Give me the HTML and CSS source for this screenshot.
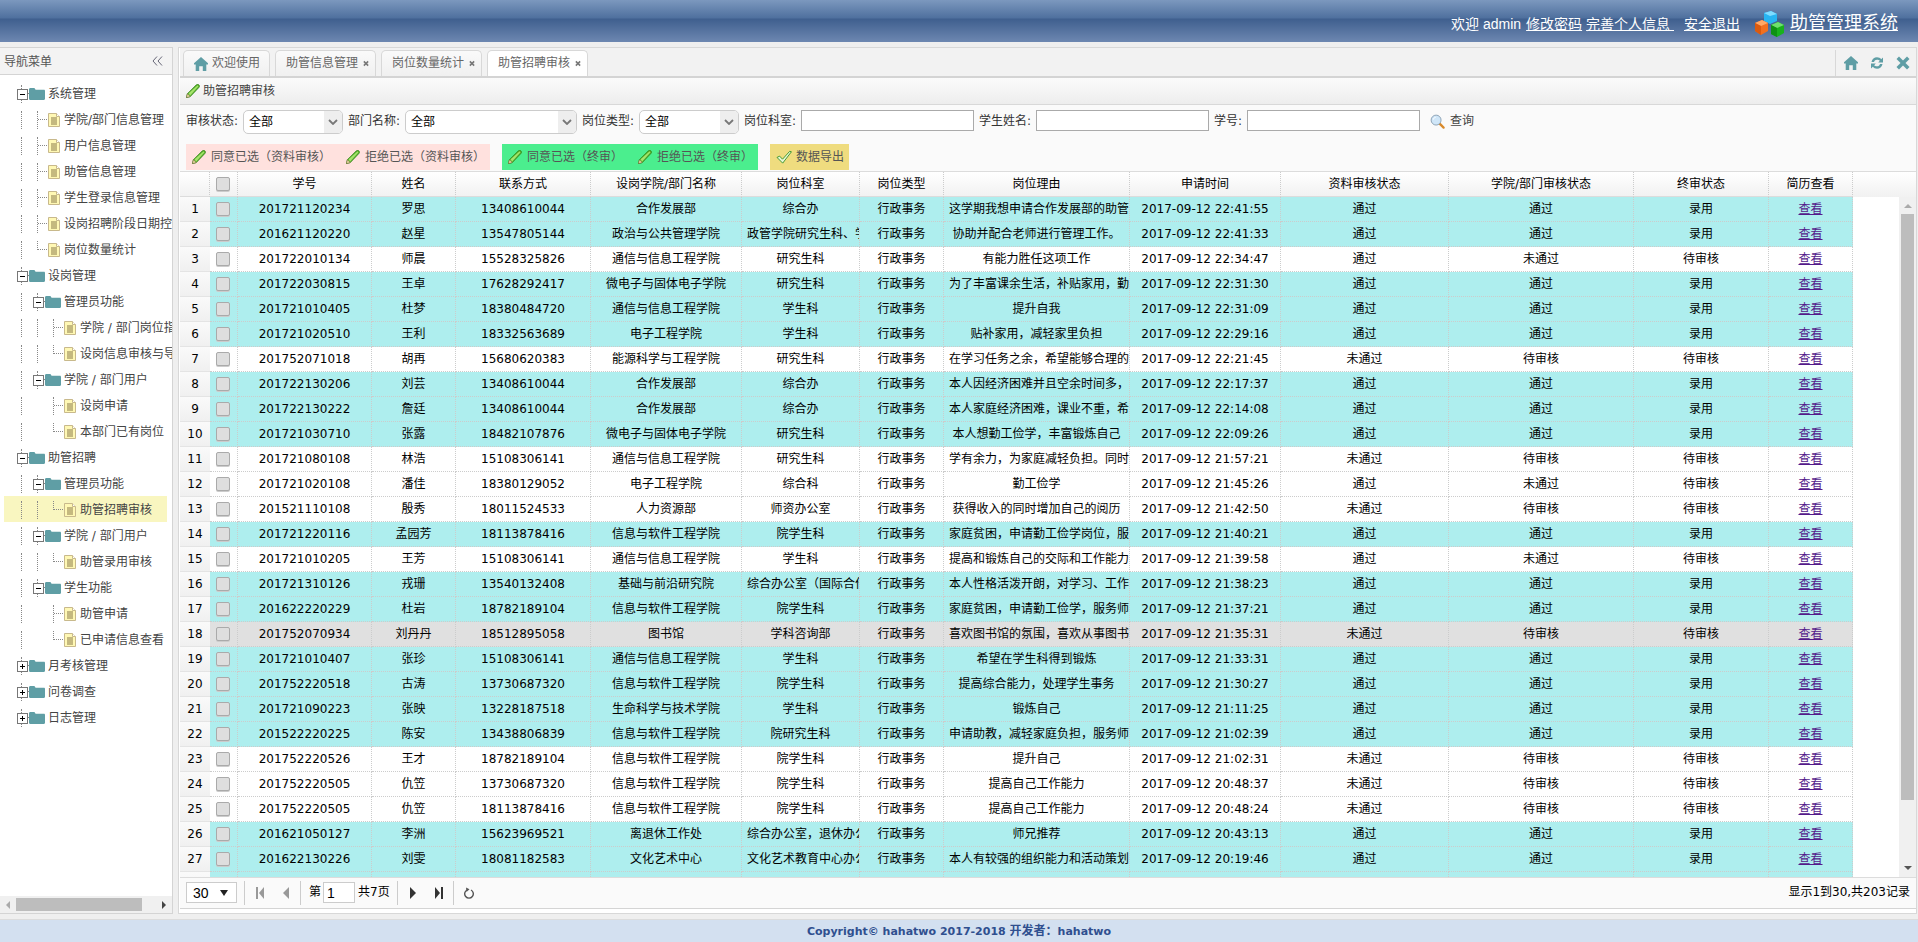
FILE: index.html
```html
<!DOCTYPE html>
<html lang="zh-CN">
<head>
<meta charset="utf-8">
<title>助管管理系统</title>
<link rel="stylesheet" href="styles.css">
</head>
<body>
<svg class="sprite" xmlns="http://www.w3.org/2000/svg">
  <symbol id="i-pencil" viewBox="0.5 0.5 15 15"><path d="M1 15l1-4L11.500 1.500c.8-.8 2-.8 2.800 0s.7 1.900 0 2.700L5 14z" fill="#5cb82c" stroke="#2f7d16" stroke-width=".9"/><path d="M3.300 10.500L12.800 2l1 1L5 12.700z" fill="#a6e36d"/><path d="M1 15l1-4 3 3z" fill="#f4e2b0" stroke="#7a6a3a" stroke-width=".6"/></symbol>
  <symbol id="i-folder" viewBox="0 0 16 13"><path d="M0 2.500C0 1.500.6 1 1.400 1h3.300c.8 0 1.100.4 1.400 1l.5.800h8.300c.7 0 1.100.4 1.100 1.100v7.900c0 .7-.4 1.200-1.100 1.200H1.100C.4 13 0 12.500 0 11.800z" fill="#5f9ea5"/></symbol>
  <symbol id="i-file" viewBox="0 0 12 14"><path d="M.5.500h8l3 3v10H.500z" fill="#fff8b4" stroke="#c8b98c"/><path d="M8.500.500v3h3" fill="#fff" stroke="#c8b98c"/><path d="M3 5h6M3 7h6M3 9h6M3 11h6" stroke="#8a7a4a"/></symbol>
  <symbol id="i-home" viewBox="0 0 14 14"><path d="M7 0L14 6.300V7.500H12.300V14H8.800V9.300H5.200V14H1.700V7.500H0V6.300z" fill="#5f9ea5"/></symbol>
  <symbol id="i-refresh" viewBox="0 0 14 14"><path d="M1.500 6C2 3 4.300 1.300 7 1.300c1.800 0 3.200.7 4.200 1.900L13 1.500v5H8.200l1.600-1.700C9.200 4 8.200 3.700 7 3.700 5.500 3.700 4.500 4.600 4 6zM12.500 8C12 11 9.700 12.700 7 12.700c-1.800 0-3.200-.7-4.200-1.900L1 12.500v-5h4.800L4.200 9.200C4.800 10 5.800 10.300 7 10.300c1.500 0 2.500-.9 3-2.300z" fill="#5f9ea5"/></symbol>
  <symbol id="i-close" viewBox="0 0 14 14"><path d="M3 .5L7 4.500 11 .5 13.500 3 9.500 7 13.500 11 11 13.500 7 9.500 3 13.500 .5 11 4.500 7 .5 3z" fill="#5f9ea5"/></symbol>
  <symbol id="i-x" viewBox="0 0 7 7"><path d="M1 1l5 5M6 1L1 6" stroke="#777" stroke-width="1.800"/></symbol>
  <symbol id="i-search" viewBox="0 0 16 16"><path d="M9.500 9.500L14.500 14.500" stroke="#d98a2b" stroke-width="2.400" stroke-linecap="round"/><circle cx="6.500" cy="6.500" r="5.300" fill="#cfe6f8" stroke="#8a9fb2"/><path d="M3.500 6c.3-1.500 1.200-2.300 2.600-2.500" stroke="#fff" fill="none"/></symbol>
  <symbol id="i-check" viewBox="0 0 18 16"><path d="M1 8.500l3-1.500 3.300 3.500L15.500 1.500l2 .5L7.500 15z" fill="#e6f6d4" stroke="#2f8f23"/></symbol>
  <symbol id="i-chev" viewBox="0 0 10 6"><path d="M1 1l4 4 4-4" fill="none" stroke="#777" stroke-width="1.800"/></symbol>
  <symbol id="i-chevs" viewBox="0 0 11 10"><path d="M5 .5L1 5l4 4.500M10 .5L6 5l4 4.500" fill="none" stroke="#667" stroke-width="1"/></symbol>
  <symbol id="i-logo" viewBox="0 0 31 27"><path d="M10 2l7-2 6 3v7l-7 3-6-3z" fill="#27b4f2"/><path d="M10 2l6 3 7-2-6-3z" fill="#7fdcff"/><path d="M1 12l7-3 6 3v8l-7 4-6-4z" fill="#f2701f"/><path d="M1 12l6 3 7-3-6-3z" fill="#ffa866"/><path d="M7 15v9l-6-4v-8z" fill="#d95a10"/><path d="M17 14l7-3 6 3v8l-7 4-6-3z" fill="#18b21c"/><path d="M17 14l6 3 7-3-6-3z" fill="#6fe06f"/><path d="M23 17v9l-6-3v-9z" fill="#0e9212"/></symbol>
  <symbol id="p-first" viewBox="0 0 8 12"><path d="M0 0h2v12H0zM8 0v12L3 6z" fill="#999"/></symbol>
  <symbol id="p-prev" viewBox="0 0 6 12"><path d="M6 0v12L0 6z" fill="#999"/></symbol>
  <symbol id="p-next" viewBox="0 0 6 12"><path d="M0 0v12l6-6z" fill="#333"/></symbol>
  <symbol id="p-last" viewBox="0 0 8 12"><path d="M0 0v12l5-6zM6 0h2v12H6z" fill="#333"/></symbol>
  <symbol id="p-reload" viewBox="0 0 10 12"><path d="M3 3A4.300 4.300 0 1 0 7 3" fill="none" stroke="#555" stroke-width="1.400"/><path d="M2 .5l3.500 1.800L2.500 5z" fill="#555"/></symbol>
</svg>

<header class="topbar">
  <span class="welcome">欢迎 admin</span>
  <a class="toplink" href="#">修改密码</a>
  <a class="toplink" href="#">完善个人信息&nbsp;</a>
  <a class="toplink exit" href="#">安全退出</a>
  <svg class="logo"><use href="#i-logo"/></svg>
  <a class="brand" href="#">助管管理系统</a>
</header>

<main class="workspace">
  <aside class="sidebar">
    <div class="side-head"><span>导航菜单</span><svg class="collapse"><use href="#i-chevs"/></svg></div>
    <nav class="tree">
      <div class="node"><span class="tog"></span><svg class="ic-folder"><use href="#i-folder"/></svg><span class="lbl">系统管理</span></div>
      <div class="node"><span class="ind"></span><span class="join"></span><svg class="ic-file"><use href="#i-file"/></svg><span class="lbl">学院/部门信息管理</span></div>
      <div class="node"><span class="ind"></span><span class="join"></span><svg class="ic-file"><use href="#i-file"/></svg><span class="lbl">用户信息管理</span></div>
      <div class="node"><span class="ind"></span><span class="join"></span><svg class="ic-file"><use href="#i-file"/></svg><span class="lbl">助管信息管理</span></div>
      <div class="node"><span class="ind"></span><span class="join"></span><svg class="ic-file"><use href="#i-file"/></svg><span class="lbl">学生登录信息管理</span></div>
      <div class="node"><span class="ind"></span><span class="join"></span><svg class="ic-file"><use href="#i-file"/></svg><span class="lbl">设岗招聘阶段日期控制</span></div>
      <div class="node"><span class="ind"></span><span class="join last"></span><svg class="ic-file"><use href="#i-file"/></svg><span class="lbl">岗位数量统计</span></div>
      <div class="node"><span class="tog"></span><svg class="ic-folder"><use href="#i-folder"/></svg><span class="lbl">设岗管理</span></div>
      <div class="node"><span class="ind"></span><span class="tog"></span><svg class="ic-folder"><use href="#i-folder"/></svg><span class="lbl">管理员功能</span></div>
      <div class="node"><span class="ind"></span><span class="ind"></span><span class="join"></span><svg class="ic-file"><use href="#i-file"/></svg><span class="lbl">学院 / 部门岗位指标</span></div>
      <div class="node"><span class="ind"></span><span class="ind"></span><span class="join last"></span><svg class="ic-file"><use href="#i-file"/></svg><span class="lbl">设岗信息审核与导出</span></div>
      <div class="node"><span class="ind"></span><span class="tog"></span><svg class="ic-folder"><use href="#i-folder"/></svg><span class="lbl">学院 / 部门用户</span></div>
      <div class="node"><span class="ind"></span><span class="ind none"></span><span class="join"></span><svg class="ic-file"><use href="#i-file"/></svg><span class="lbl">设岗申请</span></div>
      <div class="node"><span class="ind"></span><span class="ind none"></span><span class="join last"></span><svg class="ic-file"><use href="#i-file"/></svg><span class="lbl">本部门已有岗位</span></div>
      <div class="node"><span class="tog"></span><svg class="ic-folder"><use href="#i-folder"/></svg><span class="lbl">助管招聘</span></div>
      <div class="node"><span class="ind"></span><span class="tog"></span><svg class="ic-folder"><use href="#i-folder"/></svg><span class="lbl">管理员功能</span></div>
      <div class="node current"><span class="ind"></span><span class="ind"></span><span class="join last"></span><svg class="ic-file"><use href="#i-file"/></svg><span class="lbl">助管招聘审核</span></div>
      <div class="node"><span class="ind"></span><span class="tog"></span><svg class="ic-folder"><use href="#i-folder"/></svg><span class="lbl">学院 / 部门用户</span></div>
      <div class="node"><span class="ind"></span><span class="ind"></span><span class="join last"></span><svg class="ic-file"><use href="#i-file"/></svg><span class="lbl">助管录用审核</span></div>
      <div class="node"><span class="ind"></span><span class="tog"></span><svg class="ic-folder"><use href="#i-folder"/></svg><span class="lbl">学生功能</span></div>
      <div class="node"><span class="ind"></span><span class="ind none"></span><span class="join"></span><svg class="ic-file"><use href="#i-file"/></svg><span class="lbl">助管申请</span></div>
      <div class="node"><span class="ind"></span><span class="ind none"></span><span class="join last"></span><svg class="ic-file"><use href="#i-file"/></svg><span class="lbl">已申请信息查看</span></div>
      <div class="node"><span class="tog plus"></span><svg class="ic-folder"><use href="#i-folder"/></svg><span class="lbl">月考核管理</span></div>
      <div class="node"><span class="tog plus"></span><svg class="ic-folder"><use href="#i-folder"/></svg><span class="lbl">问卷调查</span></div>
      <div class="node"><span class="tog plus"></span><svg class="ic-folder"><use href="#i-folder"/></svg><span class="lbl">日志管理</span></div>
    </nav>
    <div class="hscroll"><span class="arr-l"></span><span class="hthumb"></span><span class="arr-r"></span></div>
  </aside>

  <section class="content">
    <div class="tabs">
      <div class="tab t1"><svg class="tab-home"><use href="#i-home"/></svg>欢迎使用</div>
      <div class="tab">助管信息管理<svg class="tab-x"><use href="#i-x"/></svg></div>
      <div class="tab">岗位数量统计<svg class="tab-x"><use href="#i-x"/></svg></div>
      <div class="tab active">助管招聘审核<svg class="tab-x"><use href="#i-x"/></svg></div>
      <div class="tab-tools">
        <svg><use href="#i-home"/></svg><svg><use href="#i-refresh"/></svg><svg><use href="#i-close"/></svg>
      </div>
    </div>
    <div class="inner">
      <div class="title"><svg class="pencil"><use href="#i-pencil"/></svg>助管招聘审核</div>
      <div class="filters">
        <div class="filter-row">
          <label>审核状态:</label>
          <div class="combo w100"><span>全部</span><i><svg><use href="#i-chev"/></svg></i></div>
          <label>部门名称:</label>
          <div class="combo w172"><span>全部</span><i><svg><use href="#i-chev"/></svg></i></div>
          <label>岗位类型:</label>
          <div class="combo w100"><span>全部</span><i><svg><use href="#i-chev"/></svg></i></div>
          <label>岗位科室:</label>
          <input class="txt" type="text">
          <label>学生姓名:</label>
          <input class="txt" type="text">
          <label class="short">学号:</label>
          <input class="txt" type="text">
          <span class="query"><svg><use href="#i-search"/></svg>查询</span>
        </div>
        <div class="action-row">
          <div class="bar red">
            <span class="act"><svg class="pencil"><use href="#i-pencil"/></svg>同意已选（资料审核）</span>
            <span class="act"><svg class="pencil"><use href="#i-pencil"/></svg>拒绝已选（资料审核）</span>
          </div>
          <div class="bar green">
            <span class="act"><svg class="pencil"><use href="#i-pencil"/></svg>同意已选（终审）</span>
            <span class="act"><svg class="pencil"><use href="#i-pencil"/></svg>拒绝已选（终审）</span>
          </div>
          <div class="bar yellow">
            <span class="act"><svg class="check"><use href="#i-check"/></svg>数据导出</span>
          </div>
        </div>
      </div>
      <div class="grid">
        <table>
          <colgroup>
            <col class="c-n"><col class="c-k"><col class="c-id"><col class="c-name"><col class="c-tel"><col class="c-dept"><col class="c-off"><col class="c-type"><col class="c-why"><col class="c-time"><col class="c-s1"><col class="c-s2"><col class="c-s3"><col class="c-cv">
          </colgroup>
          <thead>
            <tr><th class="n"></th><th><b class="cb"></b></th><th>学号</th><th>姓名</th><th>联系方式</th><th>设岗学院/部门名称</th><th>岗位科室</th><th>岗位类型</th><th>岗位理由</th><th>申请时间</th><th>资料审核状态</th><th>学院/部门审核状态</th><th>终审状态</th><th>简历查看</th></tr>
          </thead>
          <tbody>
            <tr class="ok"><td class="n">1</td><td><b class="cb"></b></td><td>201721120234</td><td>罗思</td><td>13408610044</td><td>合作发展部</td><td>综合办</td><td>行政事务</td><td>这学期我想申请合作发展部的助管</td><td>2017-09-12 22:41:55</td><td>通过</td><td>通过</td><td>录用</td><td><a href="#">查看</a></td></tr>
            <tr class="ok"><td class="n">2</td><td><b class="cb"></b></td><td>201621120220</td><td>赵星</td><td>13547805144</td><td>政治与公共管理学院</td><td>政管学院研究生科、学生科</td><td>行政事务</td><td>协助并配合老师进行管理工作。</td><td>2017-09-12 22:41:33</td><td>通过</td><td>通过</td><td>录用</td><td><a href="#">查看</a></td></tr>
            <tr><td class="n">3</td><td><b class="cb"></b></td><td>201722010134</td><td>师晨</td><td>15528325826</td><td>通信与信息工程学院</td><td>研究生科</td><td>行政事务</td><td>有能力胜任这项工作</td><td>2017-09-12 22:34:47</td><td>通过</td><td>未通过</td><td>待审核</td><td><a href="#">查看</a></td></tr>
            <tr class="ok"><td class="n">4</td><td><b class="cb"></b></td><td>201722030815</td><td>王卓</td><td>17628292417</td><td>微电子与固体电子学院</td><td>研究生科</td><td>行政事务</td><td>为了丰富课余生活，补贴家用，勤工俭学</td><td>2017-09-12 22:31:30</td><td>通过</td><td>通过</td><td>录用</td><td><a href="#">查看</a></td></tr>
            <tr class="ok"><td class="n">5</td><td><b class="cb"></b></td><td>201721010405</td><td>杜梦</td><td>18380484720</td><td>通信与信息工程学院</td><td>学生科</td><td>行政事务</td><td>提升自我</td><td>2017-09-12 22:31:09</td><td>通过</td><td>通过</td><td>录用</td><td><a href="#">查看</a></td></tr>
            <tr class="ok"><td class="n">6</td><td><b class="cb"></b></td><td>201721020510</td><td>王利</td><td>18332563689</td><td>电子工程学院</td><td>学生科</td><td>行政事务</td><td>贴补家用，减轻家里负担</td><td>2017-09-12 22:29:16</td><td>通过</td><td>通过</td><td>录用</td><td><a href="#">查看</a></td></tr>
            <tr><td class="n">7</td><td><b class="cb"></b></td><td>201752071018</td><td>胡再</td><td>15680620383</td><td>能源科学与工程学院</td><td>研究生科</td><td>行政事务</td><td>在学习任务之余，希望能够合理的安排</td><td>2017-09-12 22:21:45</td><td>未通过</td><td>待审核</td><td>待审核</td><td><a href="#">查看</a></td></tr>
            <tr class="ok"><td class="n">8</td><td><b class="cb"></b></td><td>201722130206</td><td>刘芸</td><td>13408610044</td><td>合作发展部</td><td>综合办</td><td>行政事务</td><td>本人因经济困难并且空余时间多，希望</td><td>2017-09-12 22:17:37</td><td>通过</td><td>通过</td><td>录用</td><td><a href="#">查看</a></td></tr>
            <tr class="ok"><td class="n">9</td><td><b class="cb"></b></td><td>201722130222</td><td>詹廷</td><td>13408610044</td><td>合作发展部</td><td>综合办</td><td>行政事务</td><td>本人家庭经济困难，课业不重，希望</td><td>2017-09-12 22:14:08</td><td>通过</td><td>通过</td><td>录用</td><td><a href="#">查看</a></td></tr>
            <tr class="ok"><td class="n">10</td><td><b class="cb"></b></td><td>201721030710</td><td>张露</td><td>18482107876</td><td>微电子与固体电子学院</td><td>研究生科</td><td>行政事务</td><td>本人想勤工俭学，丰富锻炼自己</td><td>2017-09-12 22:09:26</td><td>通过</td><td>通过</td><td>录用</td><td><a href="#">查看</a></td></tr>
            <tr><td class="n">11</td><td><b class="cb"></b></td><td>201721080108</td><td>林浩</td><td>15108306141</td><td>通信与信息工程学院</td><td>研究生科</td><td>行政事务</td><td>学有余力，为家庭减轻负担。同时锻炼</td><td>2017-09-12 21:57:21</td><td>未通过</td><td>待审核</td><td>待审核</td><td><a href="#">查看</a></td></tr>
            <tr><td class="n">12</td><td><b class="cb"></b></td><td>201721020108</td><td>潘佳</td><td>18380129052</td><td>电子工程学院</td><td>综合科</td><td>行政事务</td><td>勤工俭学</td><td>2017-09-12 21:45:26</td><td>通过</td><td>未通过</td><td>待审核</td><td><a href="#">查看</a></td></tr>
            <tr><td class="n">13</td><td><b class="cb"></b></td><td>201521110108</td><td>殷秀</td><td>18011524533</td><td>人力资源部</td><td>师资办公室</td><td>行政事务</td><td>获得收入的同时增加自己的阅历</td><td>2017-09-12 21:42:50</td><td>未通过</td><td>待审核</td><td>待审核</td><td><a href="#">查看</a></td></tr>
            <tr class="ok"><td class="n">14</td><td><b class="cb"></b></td><td>201721220116</td><td>孟园芳</td><td>18113878416</td><td>信息与软件工程学院</td><td>院学生科</td><td>行政事务</td><td>家庭贫困，申请勤工俭学岗位，服务</td><td>2017-09-12 21:40:21</td><td>通过</td><td>通过</td><td>录用</td><td><a href="#">查看</a></td></tr>
            <tr><td class="n">15</td><td><b class="cb"></b></td><td>201721010205</td><td>王芳</td><td>15108306141</td><td>通信与信息工程学院</td><td>学生科</td><td>行政事务</td><td>提高和锻炼自己的交际和工作能力</td><td>2017-09-12 21:39:58</td><td>通过</td><td>未通过</td><td>待审核</td><td><a href="#">查看</a></td></tr>
            <tr class="ok"><td class="n">16</td><td><b class="cb"></b></td><td>201721310126</td><td>戎珊</td><td>13540132408</td><td>基础与前沿研究院</td><td>综合办公室（国际合作部）</td><td>行政事务</td><td>本人性格活泼开朗，对学习、工作认真</td><td>2017-09-12 21:38:23</td><td>通过</td><td>通过</td><td>录用</td><td><a href="#">查看</a></td></tr>
            <tr class="ok"><td class="n">17</td><td><b class="cb"></b></td><td>201622220229</td><td>杜岩</td><td>18782189104</td><td>信息与软件工程学院</td><td>院学生科</td><td>行政事务</td><td>家庭贫困，申请勤工俭学，服务师生</td><td>2017-09-12 21:37:21</td><td>通过</td><td>通过</td><td>录用</td><td><a href="#">查看</a></td></tr>
            <tr class="gray"><td class="n">18</td><td><b class="cb"></b></td><td>201752070934</td><td>刘丹丹</td><td>18512895058</td><td>图书馆</td><td>学科咨询部</td><td>行政事务</td><td>喜欢图书馆的氛围，喜欢从事图书管理</td><td>2017-09-12 21:35:31</td><td>未通过</td><td>待审核</td><td>待审核</td><td><a href="#">查看</a></td></tr>
            <tr class="ok"><td class="n">19</td><td><b class="cb"></b></td><td>201721010407</td><td>张珍</td><td>15108306141</td><td>通信与信息工程学院</td><td>学生科</td><td>行政事务</td><td>希望在学生科得到锻炼</td><td>2017-09-12 21:33:31</td><td>通过</td><td>通过</td><td>录用</td><td><a href="#">查看</a></td></tr>
            <tr class="ok"><td class="n">20</td><td><b class="cb"></b></td><td>201752220518</td><td>古涛</td><td>13730687320</td><td>信息与软件工程学院</td><td>院学生科</td><td>行政事务</td><td>提高综合能力，处理学生事务</td><td>2017-09-12 21:30:27</td><td>通过</td><td>通过</td><td>录用</td><td><a href="#">查看</a></td></tr>
            <tr class="ok"><td class="n">21</td><td><b class="cb"></b></td><td>201721090223</td><td>张映</td><td>13228187518</td><td>生命科学与技术学院</td><td>学生科</td><td>行政事务</td><td>锻炼自己</td><td>2017-09-12 21:11:25</td><td>通过</td><td>通过</td><td>录用</td><td><a href="#">查看</a></td></tr>
            <tr class="ok"><td class="n">22</td><td><b class="cb"></b></td><td>201522220225</td><td>陈安</td><td>13438806839</td><td>信息与软件工程学院</td><td>院研究生科</td><td>行政事务</td><td>申请助教，减轻家庭负担，服务师生</td><td>2017-09-12 21:02:39</td><td>通过</td><td>通过</td><td>录用</td><td><a href="#">查看</a></td></tr>
            <tr><td class="n">23</td><td><b class="cb"></b></td><td>201752220526</td><td>王才</td><td>18782189104</td><td>信息与软件工程学院</td><td>院学生科</td><td>行政事务</td><td>提升自己</td><td>2017-09-12 21:02:31</td><td>未通过</td><td>待审核</td><td>待审核</td><td><a href="#">查看</a></td></tr>
            <tr><td class="n">24</td><td><b class="cb"></b></td><td>201752220505</td><td>仇笠</td><td>13730687320</td><td>信息与软件工程学院</td><td>院学生科</td><td>行政事务</td><td>提高自己工作能力</td><td>2017-09-12 20:48:37</td><td>未通过</td><td>待审核</td><td>待审核</td><td><a href="#">查看</a></td></tr>
            <tr><td class="n">25</td><td><b class="cb"></b></td><td>201752220505</td><td>仇笠</td><td>18113878416</td><td>信息与软件工程学院</td><td>院学生科</td><td>行政事务</td><td>提高自己工作能力</td><td>2017-09-12 20:48:24</td><td>未通过</td><td>待审核</td><td>待审核</td><td><a href="#">查看</a></td></tr>
            <tr class="ok"><td class="n">26</td><td><b class="cb"></b></td><td>201621050127</td><td>李洲</td><td>15623969521</td><td>离退休工作处</td><td>综合办公室，退休办公室</td><td>行政事务</td><td>师兄推荐</td><td>2017-09-12 20:43:13</td><td>通过</td><td>通过</td><td>录用</td><td><a href="#">查看</a></td></tr>
            <tr class="ok"><td class="n">27</td><td><b class="cb"></b></td><td>201622130226</td><td>刘雯</td><td>18081182583</td><td>文化艺术中心</td><td>文化艺术教育中心办公室</td><td>行政事务</td><td>本人有较强的组织能力和活动策划能力</td><td>2017-09-12 20:19:46</td><td>通过</td><td>通过</td><td>录用</td><td><a href="#">查看</a></td></tr>
            <tr class="ok"><td class="n"></td><td><b class="cb"></b></td><td></td><td></td><td></td><td></td><td></td><td></td><td></td><td></td><td></td><td></td><td></td><td></td></tr>
          </tbody>
        </table>
        <div class="vscroll"><span class="arr-u"></span><span class="vthumb"></span><span class="arr-d"></span></div>
      </div>
      <div class="pager">
        <div class="psize"><span>30</span><em></em></div>
        <span class="psep s1"></span>
        <svg class="pb first"><use href="#p-first"/></svg>
        <svg class="pb prev"><use href="#p-prev"/></svg>
        <span class="psep s2"></span>
        <span class="pl p-no">第</span><div class="pinput">1</div><span class="pl p-total">共7页</span>
        <span class="psep s3"></span>
        <svg class="pb next"><use href="#p-next"/></svg>
        <svg class="pb last"><use href="#p-last"/></svg>
        <span class="psep s4"></span>
        <svg class="pb reload"><use href="#p-reload"/></svg>
        <span class="pinfo">显示1到30,共203记录</span>
      </div>
    </div>
  </section>
</main>

<footer class="footer"><span>Copyright© hahatwo 2017-2018 <span class="cjk">开发者：</span>hahatwo</span></footer>
</body>
</html>
```

FILE: styles.css
```css
* { box-sizing: border-box; }
html, body { height: 100%; margin: 0; }
body {
  display: flex;
  flex-direction: column;
  height: 942px;
  overflow: hidden;
  background: #efefef;
  color: #000;
  font: 12px/1.2 "DejaVu Sans", "Noto Sans CJK SC", sans-serif;
}
.sprite { display: block; flex: none; width: 0; height: 0; overflow: hidden; }

/* top bar */
.topbar {
  flex: none;
  height: 42px;
  display: flex;
  align-items: center;
  justify-content: flex-end;
  padding: 6px 20px 0 0;
  background: linear-gradient(#7c98be 0, #4f709e 18px, #3f5f8e 19px, #6d87b1 42px);
  color: #fff;
  font: 14px/1.2 "Liberation Sans", "Noto Sans CJK SC", sans-serif;
}
.topbar a { color: #fff; }
.welcome { margin-right: 5px; }
.toplink { margin-right: 4px; }
.toplink.exit { margin-left: 6px; margin-right: 14px; }
.logo { width: 31px; height: 27px; margin: 0 5px 0 0; }
.brand { font-size: 18px; margin-top: -1px; }

/* page body */
.workspace {
  flex: 1;
  min-height: 0;
  display: flex;
  gap: 5px;
  padding: 5px 1px 5px 0;
}

/* sidebar */
.sidebar {
  flex: none;
  width: 173px;
  display: flex;
  flex-direction: column;
  background: #fff;
  border: 1px solid #d4d4d4;
  border-left: 0;
  overflow: hidden;
}
.side-head {
  flex: none;
  height: 27px;
  display: flex;
  align-items: center;
  justify-content: space-between;
  padding: 2px 9px 0 4px;
  background: #f3f3f3;
  border-bottom: 1px solid #d4d4d4;
  color: #555;
}
.collapse { width: 11px; height: 10px; margin-top: -2px; }
.tree { flex: 1; min-height: 0; overflow: hidden; padding-top: 5px; }
.node {
  display: flex;
  align-items: center;
  height: 26px;
  margin: 0 5px 0 4px;
  padding-left: 9px;
  color: #444;
  white-space: nowrap;
}
.node.current { background: #f9f6c0; }
.lbl { flex: none; margin-left: 3px; padding-top: 2px; }
.ind, .join, .tog { flex: none; position: relative; width: 16px; height: 26px; }
.ind::before {
  content: "";
  position: absolute;
  left: 8px;
  top: 5px;
  height: 18px;
  border-left: 1px dotted #888;
}
.ind.none::before { display: none; }
.join::before {
  content: "";
  position: absolute;
  left: 8px;
  top: 5px;
  height: 18px;
  border-left: 1px dotted #888;
}
.join.last::before { height: 9px; }
.join::after {
  content: "";
  position: absolute;
  left: 9px;
  top: 13px;
  width: 9px;
  border-top: 1px dotted #888;
}
.tog {
  background: repeating-linear-gradient(to right, #888 0 1px, transparent 1px 2px) 13px 13px / 3px 1px no-repeat;
}
.tog::before {
  content: "";
  position: absolute;
  z-index: 1;
  left: 4px;
  top: 9px;
  width: 9px;
  height: 9px;
  background: linear-gradient(#000, #000) center / 5px 1px no-repeat #fff;
  border: 1px solid #777;
}
.tog.plus::before {
  background:
    linear-gradient(#000, #000) center / 5px 1px no-repeat,
    linear-gradient(#000, #000) center / 1px 5px no-repeat,
    #fff;
}
.tog::after {
  content: "";
  position: absolute;
  left: 8px;
  top: 5px;
  height: 18px;
  border-left: 1px dotted #888;
}
.ic-folder { flex: none; width: 16px; height: 13px; margin-top: 1px; }
.ic-file { flex: none; width: 12px; height: 14px; margin: 1px 1px 0 3px; }
.hscroll {
  flex: none;
  height: 17px;
  display: flex;
  align-items: center;
  background: #f0f0f0;
  padding: 0 6px;
}
.hthumb { width: 126px; height: 13px; margin: 0 20px 0 6px; background: #bdbdbd; }
.arr-l { width: 0; height: 0; border: 4px solid transparent; border-right: 4px solid #aaa; border-left: 0; }
.arr-r { width: 0; height: 0; border: 4px solid transparent; border-left: 4px solid #444; border-right: 0; }

/* content panel */
.content {
  flex: 1;
  min-width: 0;
  display: flex;
  flex-direction: column;
  background: #fff;
  border: 1px solid #d8d8d8;
  padding: 0 0 4px 1px;
}
.tabs {
  flex: none;
  height: 30px;
  display: flex;
  align-items: flex-start;
  gap: 5px;
  padding: 2px 0 0 3px;
  background: #f2f2f2;
  border-bottom: 2px solid #d4d4d4;
}
.tab {
  height: 26px;
  display: flex;
  align-items: center;
  padding: 0 6px 0 10px;
  background: linear-gradient(#fafafa, #f0f0f0);
  border: 1px solid #d8d8d8;
  border-bottom: 0;
  border-radius: 5px 5px 0 0;
  color: #666;
}
.tab.t1 { padding-right: 9px; }
.tab.active { background: #fff; }
.tab-home { width: 14px; height: 14px; margin-right: 4px; }
.tab-x { width: 6px; height: 7px; margin-left: 5px; }
.tab-tools {
  margin-left: auto;
  height: 26px;
  width: 81px;
  display: flex;
  align-items: center;
  gap: 12px;
  padding: 0 0 0 8px;
  border-left: 1px solid #d8d8d8;
}
.tab-tools svg { width: 14px; height: 14px; }

.inner {
  flex: 1;
  min-height: 0;
  display: flex;
  flex-direction: column;
}
.title {
  flex: none;
  height: 27px;
  display: flex;
  align-items: center;
  padding-left: 6px;
  background: linear-gradient(#fbfbfb, #ededed);
  border-bottom: 1px solid #d8d8d8;
  color: #444;
}
.pencil { flex: none; width: 14px; height: 14px; margin-right: 3px; }
.filters {
  flex: none;
  height: 67px;
  padding: 5px 0 0 5px;
  background: #fafafa;
  border-bottom: 1px solid #dcdcdc;
}
.filter-row { display: flex; align-items: flex-start; gap: 4px; height: 24px; }
.filter-row label {
  flex: none;
  width: 53px;
  margin-left: 1px;
  color: #333;
  line-height: 23px;
  white-space: nowrap;
}
.filter-row label.short { width: 29px; }
.combo {
  position: relative;
  flex: none;
  height: 24px;
  display: flex;
  align-items: center;
  padding-left: 5px;
  background: #fff;
  border: 1px solid #ccc;
  border-radius: 5px;
  overflow: hidden;
}
.combo i {
  position: absolute;
  top: 0;
  right: 0;
  bottom: 0;
  width: 18px;
  display: flex;
  align-items: center;
  justify-content: center;
  background: #eee;
}
.combo svg { width: 10px; height: 6px; }
.w100 { width: 100px; }
.w172 { width: 172px; }
.txt {
  flex: none;
  width: 173px;
  height: 21px;
  padding: 0;
  border: 1px solid #aaa;
  background: #fff;
}
.query { display: flex; align-items: center; height: 23px; margin-left: 6px; color: #444; }
.query svg { width: 15px; height: 15px; margin-right: 5px; }
.action-row { display: flex; gap: 12px; margin: 10px 0 0 1px; }
.bar {
  height: 26px;
  display: flex;
  align-items: center;
  gap: 15px;
  padding: 0 5px 0 6px;
  color: #555;
}
.bar .pencil { margin-right: 5px; }
.red { background: #ffe1de; }
.green { background: #4bee8e; }
.yellow { background: #efdc7f; }
.act { display: flex; align-items: center; }
.check { width: 16px; height: 14px; margin-right: 4px; }

/* grid */
.grid {
  position: relative;
  flex: 1;
  min-height: 0;
  overflow: hidden;
  background: linear-gradient(#fff, #f1f1f1) top / 100% 25px no-repeat #fff;
}
table {
  width: 1673px;
  table-layout: fixed;
  border-collapse: separate;
  border-spacing: 0;
}
.c-n { width: 30px; }
.c-k { width: 28px; }
.c-id { width: 134px; }
.c-name { width: 84px; }
.c-tel { width: 135px; }
.c-dept { width: 151px; }
.c-off { width: 118px; }
.c-type { width: 84px; }
.c-why { width: 186px; }
.c-time { width: 151px; }
.c-s1 { width: 168px; }
.c-s2 { width: 185px; }
.c-s3 { width: 135px; }
.c-cv { width: 84px; }
th, td {
  height: 25px;
  padding: 0 5px;
  overflow: hidden;
  text-align: center;
  white-space: nowrap;
  font-weight: 400;
  line-height: 23px;
  border-right: 1px dotted #ccc;
  border-bottom: 1px dotted #ccc;
}
th { border-bottom: 1px solid #dcdcdc; }
tbody td.n, th.n {
  padding: 0;
}
tbody td.n {
  background: linear-gradient(#fafafa, #f0f0f0);
  border-right: 0;
  border-bottom: 1px solid #e4e4e4;
}
.ok td { background: #aeeeee; }
.gray td { background: #e0e0e0; }
td a { color: #551a8b; }
.cb {
  display: block;
  width: 14px;
  height: 14px;
  margin-left: 1px;
  background: #dedede;
  border: 1px solid #aaa;
  border-radius: 2px;
  box-shadow: 0 1px 0 #ccc;
}
.vscroll {
  position: absolute;
  top: 25px;
  right: 0;
  bottom: 0;
  width: 17px;
  display: flex;
  flex-direction: column;
  align-items: center;
  background: #f0f0f0;
}
.vthumb { flex: none; width: 13px; height: 586px; margin-top: 6px; background: #bdbdbd; }
.arr-u { flex: none; width: 0; height: 0; margin-top: 7px; border: 4px solid transparent; border-bottom: 4px solid #aaa; border-top: 0; }
.arr-d { flex: none; width: 0; height: 0; margin-top: 66px; border: 4px solid transparent; border-top: 4px solid #555; border-bottom: 0; }

/* pager */
.pager {
  flex: none;
  height: 32px;
  display: flex;
  align-items: center;
  padding: 0 6px 1px 6px;
  background: #fafafa;
  border-top: 1px solid #dcdcdc;
  border-bottom: 1px solid #d4d4d4;
}
.psize, .pinput {
  flex: none;
  height: 21px;
  display: flex;
  align-items: center;
  background: #fff;
  border: 1px solid #ccc;
  font: 14px/1 "Liberation Sans", sans-serif;
}
.psize { width: 51px; justify-content: space-between; padding: 0 8px 0 6px; }
.psize em { width: 0; height: 0; border: 4px solid transparent; border-top: 6px solid #222; border-bottom: 0; }
.pinput { width: 32px; padding-left: 3px; margin-left: 2px; }
.psep { flex: none; width: 1px; height: 24px; background: #ccc; }
.s1 { margin-left: 7px; }
.s2 { margin-left: 11px; }
.s3 { margin-left: 7px; }
.s4 { margin-left: 10px; }
.pb { flex: none; height: 12px; }
.pb.first, .pb.last { width: 8px; }
.pb.prev, .pb.next { width: 6px; }
.pb.first { margin-left: 11px; }
.pb.prev { margin-left: 19px; }
.pb.next { margin-left: 12px; }
.pb.last { margin-left: 19px; }
.pb.reload { width: 10px; margin-left: 10px; }
.pl { flex: none; }
.p-no { margin-left: 8px; }
.p-total { margin-left: 3px; }
.pinfo { margin-left: auto; }

/* footer */
.footer {
  flex: none;
  height: 23px;
  display: flex;
  align-items: center;
  justify-content: center;
  background: #d3e0f0;
  border-top: 1px solid #dcdcdc;
  color: #2f4f8f;
  font-size: 11px;
  font-weight: 700;
}
.cjk { font-size: 12px; }
```
